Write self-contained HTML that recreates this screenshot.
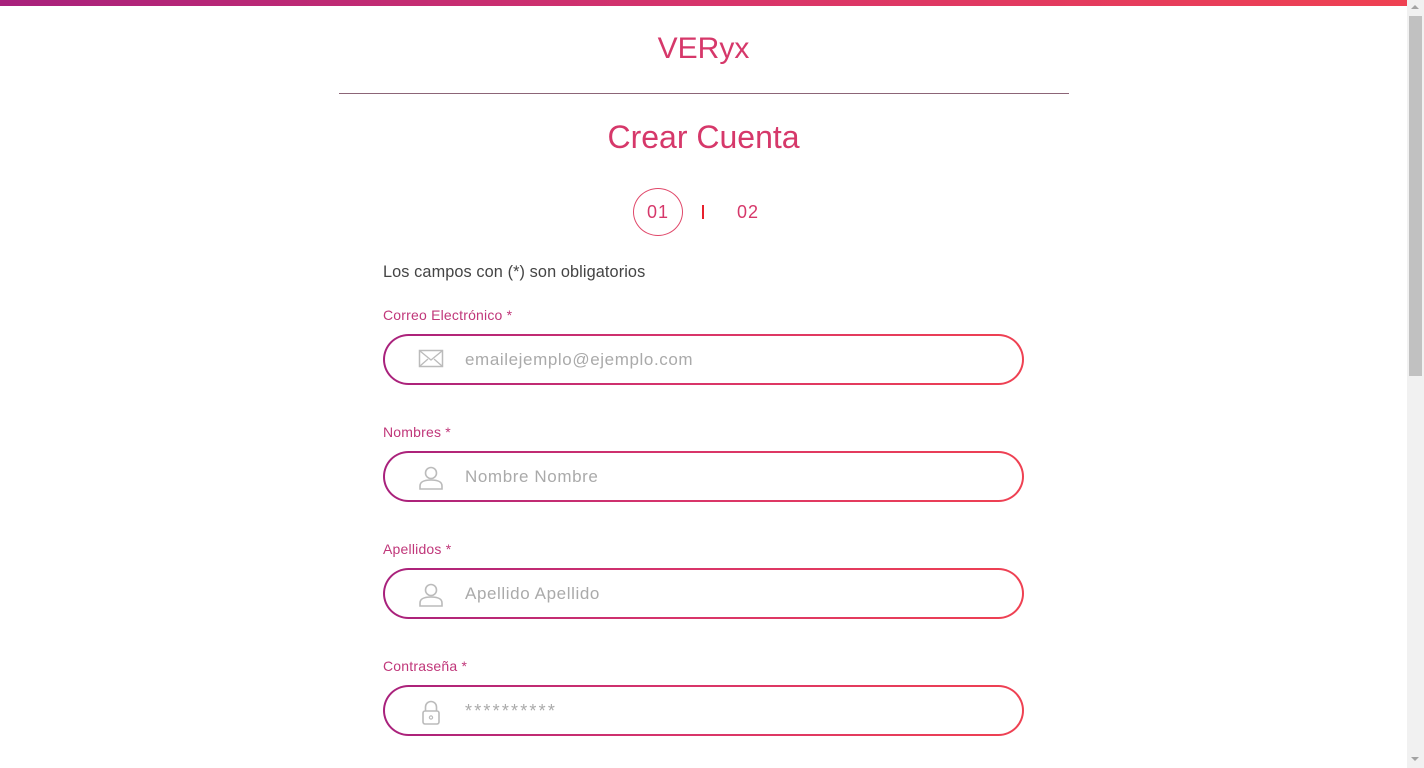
<!DOCTYPE html>
<html><head><meta charset="utf-8"><style>
*{box-sizing:border-box;margin:0;padding:0}
html,body{width:1424px;height:768px;overflow:hidden;background:#fff;font-family:"Liberation Sans","DejaVu Sans",sans-serif}
.top{position:absolute;left:0;top:0;width:1407px;height:6px;background:linear-gradient(90deg,#a8217c,#d7346b 50%,#ef4152)}
.sb{position:absolute;left:1407px;top:0;width:17px;height:768px;background:#f1f1f1}
.thumb{position:absolute;left:1409px;top:16px;width:13px;height:360px;background:#c1c1c1}
.arr{position:absolute;left:1411px;width:0;height:0;border-left:4px solid transparent;border-right:4px solid transparent}
.logo{position:absolute;left:0;width:1407px;text-align:center;top:32px;font-size:30px;color:#d6386a}
.hr{position:absolute;left:339px;top:93px;width:730px;height:1px;background:#8c6577}
.title{position:absolute;left:0;width:1407px;text-align:center;top:119px;font-size:32px;color:#d6386a}
.c1{position:absolute;left:633px;top:188px;width:50px;height:48px;border:1px solid #e0486a;border-radius:50%;text-align:center;line-height:47px;font-size:18px;color:#d6386a;letter-spacing:1px}
.sep{position:absolute;left:702px;top:205px;width:2px;height:14px;background:#e8202c}
.c2{position:absolute;left:737px;top:202px;font-size:18px;color:#d6386a;letter-spacing:1px}
.note{position:absolute;left:383px;top:263px;font-size:16.3px;color:#444;letter-spacing:.1px}
.lbl{position:absolute;left:383px;font-size:14px;color:#c0377a;letter-spacing:.2px}
.inp{position:absolute;left:383px;width:641px;height:51px;border-radius:26px;padding:2px;background:linear-gradient(90deg,#a8217c,#d7346b 45%,#ef4152)}
.inp div{width:100%;height:100%;border-radius:24px;background:#fff;position:relative}
.inp span{position:absolute;left:80px;top:14px;font-size:17px;color:#aaa;letter-spacing:.6px}
.inp svg{position:absolute;left:32px;top:11px}
</style></head><body>
<div class="top"></div>
<div class="sb"></div><div class="thumb"></div>
<div class="arr" style="top:5px;border-bottom:4px solid #a3a3a3"></div>
<div class="arr" style="top:757px;border-top:4px solid #a3a3a3"></div>
<div class="logo">VERyx</div>
<div class="hr"></div>
<div class="title">Crear Cuenta</div>
<div class="c1">01</div><div class="sep"></div><div class="c2">02</div>
<div class="note">Los campos con (*) son obligatorios</div>

<div class="lbl" style="top:307px">Correo Electrónico *</div>
<div class="inp" style="top:334px"><div>
<svg width="28" height="24" viewBox="0 0 28 24"><rect x="2.5" y="3.5" width="23" height="16" fill="none" stroke="#bbb" stroke-width="1.5"/><path d="M3 4l11 9 11-9M3 19l8-7M25 19l-8-7" fill="none" stroke="#bbb" stroke-width="1.3"/></svg>
<span>emailejemplo@ejemplo.com</span></div></div>

<div class="lbl" style="top:424px">Nombres *</div>
<div class="inp" style="top:451px"><div>
<svg width="28" height="28" viewBox="0 0 28 28"><circle cx="14" cy="9" r="5.5" fill="none" stroke="#bbb" stroke-width="1.6"/><path d="M3 25v-3c0-4 4-6 11-6s11 2 11 6v3z" fill="none" stroke="#bbb" stroke-width="1.6"/></svg>
<span>Nombre Nombre</span></div></div>

<div class="lbl" style="top:541px">Apellidos *</div>
<div class="inp" style="top:568px"><div>
<svg width="28" height="28" viewBox="0 0 28 28"><circle cx="14" cy="9" r="5.5" fill="none" stroke="#bbb" stroke-width="1.6"/><path d="M3 25v-3c0-4 4-6 11-6s11 2 11 6v3z" fill="none" stroke="#bbb" stroke-width="1.6"/></svg>
<span>Apellido Apellido</span></div></div>

<div class="lbl" style="top:658px">Contraseña *</div>
<div class="inp" style="top:685px"><div>
<svg width="28" height="28" viewBox="0 0 28 28"><path d="M8.5 13V9a5.5 5.5 0 0 1 11 0v4" fill="none" stroke="#bbb" stroke-width="1.6"/><rect x="6" y="13" width="16" height="13" rx="2" fill="none" stroke="#bbb" stroke-width="1.6"/><circle cx="14" cy="19.5" r="1.6" fill="none" stroke="#bbb" stroke-width="1.2"/></svg>
<span style="top:14px;font-size:18px;letter-spacing:2.2px">**********</span></div></div>
</body></html>
